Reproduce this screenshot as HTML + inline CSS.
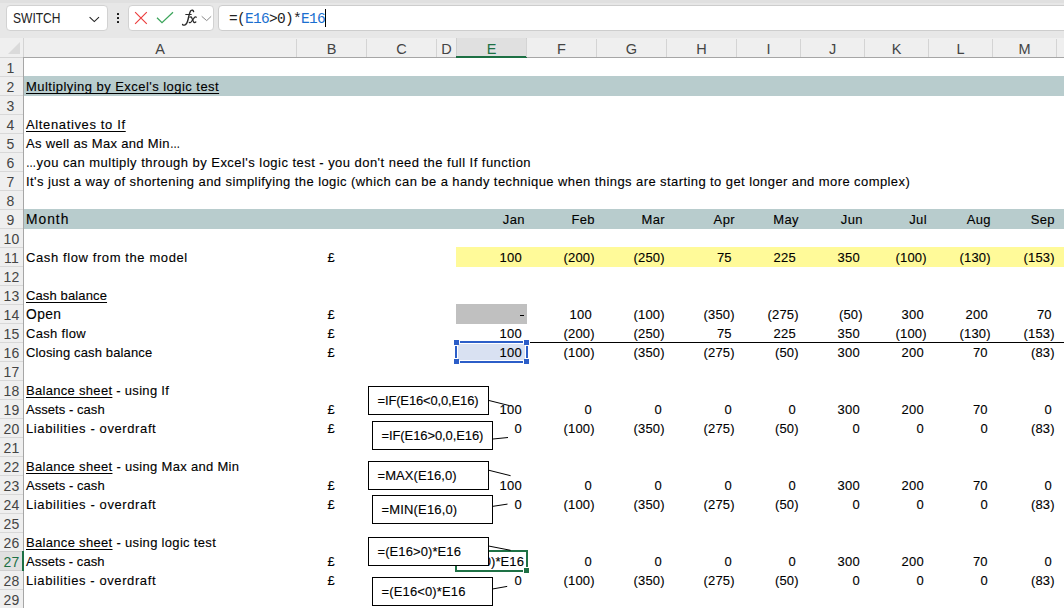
<!DOCTYPE html><html><head><meta charset="utf-8"><style>
*{margin:0;padding:0;box-sizing:border-box}
html,body{width:1064px;height:608px;overflow:hidden;background:#fff;position:relative;font-family:"Liberation Sans",sans-serif;}
.a{position:absolute}
.t{position:absolute;white-space:nowrap;font-size:13px;letter-spacing:0.4px;line-height:19px;color:#000;-webkit-text-stroke:0.12px #000}
.el{display:inline-block;width:10.5px;transform:scaleX(0.78);transform-origin:0 50%}
.rn{position:absolute;left:0;width:23px;text-align:center;font-size:14px;letter-spacing:0.3px;line-height:19px;color:#444;margin-top:1px}
.ch{position:absolute;top:40px;height:19px;text-align:center;font-size:14.5px;line-height:19px;color:#444}
.u{text-decoration:underline;text-underline-offset:2px;text-decoration-skip-ink:none}
.box{position:absolute;border:1px solid #000;background:#fff}
</style></head><body>

<div class="a" style="left:0;top:0;width:1064px;height:38px;background:#e7e7e7"></div>
<div class="a" style="left:0;top:0;width:1064px;height:3px;background:#e0e0e0"></div>
<div class="a" style="left:6px;top:5px;width:102px;height:26px;background:#fff;border:1px solid #d2d2d2;border-radius:4px"></div>
<div class="a" style="left:12.5px;top:8px;font-size:14.5px;line-height:21px;color:#222;transform:scaleX(0.83);transform-origin:0 0;white-space:nowrap">SWITCH</div>
<svg class="a" style="left:88px;top:14px" width="14" height="10" viewBox="0 0 14 10"><path d="M1.6 3.2 L6.3 7.6 L11 3.2" fill="none" stroke="#222" stroke-width="1.1"/></svg>
<div class="a" style="left:117px;top:13px;width:2.4px;height:2.4px;background:#111;border-radius:0.5px"></div>
<div class="a" style="left:117px;top:17px;width:2.4px;height:2.4px;background:#111;border-radius:0.5px"></div>
<div class="a" style="left:117px;top:21px;width:2.4px;height:2.4px;background:#111;border-radius:0.5px"></div>
<div class="a" style="left:128px;top:5px;width:86px;height:26px;background:#fff;border:1px solid #d2d2d2;border-radius:4px"></div>
<svg class="a" style="left:134px;top:11px" width="14" height="14" viewBox="0 0 14 14"><path d="M1.1 1.2 L12.8 12.9 M12.8 1.2 L1.1 12.9" fill="none" stroke="#ec3d3d" stroke-width="1.15"/></svg>
<svg class="a" style="left:156px;top:11px" width="18" height="13" viewBox="0 0 18 13"><path d="M1 6.8 L6 11.6 L17 1.2" fill="none" stroke="#3ba45a" stroke-width="1.25"/></svg>
<svg class="a" style="left:0;top:0" width="240" height="38"><g fill="none" stroke="#2a2a2a" stroke-linecap="round"><path d="M193.6 11.6 C193.4 10.2 192 9.8 191 10.5 C189.8 11.4 189.2 14.5 188.3 18.5 C187.4 22.6 186.4 24.9 184.5 25.1 C183.6 25.2 182.8 24.9 182.6 24.4" stroke-width="1.4"/><path d="M185.8 14.5 L191.2 14.5" stroke-width="1.2"/><path d="M189.9 17.2 C190.6 16.6 191.3 16.8 191.6 17.5 L193.6 21.9 C194 22.7 194.9 22.8 195.8 22" stroke-width="1.25"/><path d="M196.3 17.2 C195.8 16.7 195.1 16.7 194.5 17.4 L191.1 22 C190.5 22.8 189.8 22.9 189.3 22.5" stroke-width="1.25"/></g></svg>
<svg class="a" style="left:200px;top:14px" width="14" height="9" viewBox="0 0 14 9"><path d="M1.7 2.3 L6.7 6.6 L11.2 2.3" fill="none" stroke="#8a8a8a" stroke-width="1"/></svg>
<div class="a" style="left:218px;top:5px;width:900px;height:26px;background:#fff;border:1px solid #cdcdcd;border-radius:4px"></div>
<div class="a" style="left:229px;top:9px;font-family:'Liberation Mono',monospace;font-size:14.5px;letter-spacing:-0.7px;line-height:20px;color:#222;white-space:nowrap">=(<span style="color:#1a6fd0">E16</span>&gt;0)*<span style="color:#1a6fd0">E16</span></div>
<div class="a" style="left:325px;top:9px;width:1px;height:18px;background:#000"></div>
<div class="a" style="left:0;top:38px;width:1064px;height:19px;background:#efefef"></div>
<div class="a" style="left:0;top:57px;width:23px;height:1px;background:#d4d4d4"></div>
<div class="a" style="left:23px;top:57px;width:1041px;height:1px;background:#a6a6a6"></div>
<svg class="a" style="left:8px;top:42px" width="12" height="12" viewBox="0 0 12 12"><path d="M12 0 L12 12 L0 12 Z" fill="#dadada"/></svg>
<div class="a" style="left:296px;top:39px;width:1px;height:18px;background:#d4d4d4"></div>
<div class="ch" style="left:24px;width:272px;color:#444">A</div>
<div class="a" style="left:366px;top:39px;width:1px;height:18px;background:#d4d4d4"></div>
<div class="ch" style="left:297px;width:69px;color:#444">B</div>
<div class="a" style="left:436px;top:39px;width:1px;height:18px;background:#d4d4d4"></div>
<div class="ch" style="left:367px;width:69px;color:#444">C</div>
<div class="a" style="left:456px;top:39px;width:1px;height:18px;background:#d4d4d4"></div>
<div class="ch" style="left:437px;width:19px;color:#444">D</div>
<div class="a" style="left:456px;top:38px;width:71px;height:19px;background:#e0e0e0;border-left:1px solid #cfcfcf;border-right:1px solid #cfcfcf"></div>
<div class="a" style="left:456px;top:56px;width:71px;height:2px;background:#1d7044"></div>
<div class="a" style="left:526px;top:39px;width:1px;height:18px;background:#d4d4d4"></div>
<div class="ch" style="left:457px;width:69px;color:#1d7044">E</div>
<div class="a" style="left:596px;top:39px;width:1px;height:18px;background:#d4d4d4"></div>
<div class="ch" style="left:527px;width:69px;color:#444">F</div>
<div class="a" style="left:666px;top:39px;width:1px;height:18px;background:#d4d4d4"></div>
<div class="ch" style="left:597px;width:69px;color:#444">G</div>
<div class="a" style="left:736px;top:39px;width:1px;height:18px;background:#d4d4d4"></div>
<div class="ch" style="left:667px;width:69px;color:#444">H</div>
<div class="a" style="left:800px;top:39px;width:1px;height:18px;background:#d4d4d4"></div>
<div class="ch" style="left:737px;width:63px;color:#444">I</div>
<div class="a" style="left:864px;top:39px;width:1px;height:18px;background:#d4d4d4"></div>
<div class="ch" style="left:801px;width:63px;color:#444">J</div>
<div class="a" style="left:928px;top:39px;width:1px;height:18px;background:#d4d4d4"></div>
<div class="ch" style="left:865px;width:63px;color:#444">K</div>
<div class="a" style="left:992px;top:39px;width:1px;height:18px;background:#d4d4d4"></div>
<div class="ch" style="left:929px;width:63px;color:#444">L</div>
<div class="a" style="left:1056px;top:39px;width:1px;height:18px;background:#d4d4d4"></div>
<div class="ch" style="left:993px;width:63px;color:#444">M</div>
<div class="a" style="left:0;top:58px;width:23px;height:550px;background:#efefef"></div>
<div class="a" style="left:23px;top:38px;width:1px;height:19px;background:#d4d4d4"></div>
<div class="a" style="left:23px;top:57px;width:1px;height:551px;background:#a6a6a6"></div>
<div class="a" style="left:0;top:76px;width:23px;height:1px;background:#d8d8d8"></div>
<div class="rn" style="top:58px;left:-1px;color:#444">1</div>
<div class="a" style="left:0;top:95px;width:23px;height:1px;background:#d8d8d8"></div>
<div class="rn" style="top:77px;left:-1px;color:#444">2</div>
<div class="a" style="left:0;top:114px;width:23px;height:1px;background:#d8d8d8"></div>
<div class="rn" style="top:96px;left:-1px;color:#444">3</div>
<div class="a" style="left:0;top:133px;width:23px;height:1px;background:#d8d8d8"></div>
<div class="rn" style="top:115px;left:-1px;color:#444">4</div>
<div class="a" style="left:0;top:152px;width:23px;height:1px;background:#d8d8d8"></div>
<div class="rn" style="top:134px;left:-1px;color:#444">5</div>
<div class="a" style="left:0;top:171px;width:23px;height:1px;background:#d8d8d8"></div>
<div class="rn" style="top:153px;left:-1px;color:#444">6</div>
<div class="a" style="left:0;top:190px;width:23px;height:1px;background:#d8d8d8"></div>
<div class="rn" style="top:172px;left:-1px;color:#444">7</div>
<div class="a" style="left:0;top:209px;width:23px;height:1px;background:#d8d8d8"></div>
<div class="rn" style="top:191px;left:-1px;color:#444">8</div>
<div class="a" style="left:0;top:228px;width:23px;height:1px;background:#d8d8d8"></div>
<div class="rn" style="top:210px;left:-1px;color:#444">9</div>
<div class="a" style="left:0;top:247px;width:23px;height:1px;background:#d8d8d8"></div>
<div class="rn" style="top:229px;left:0px;color:#444">10</div>
<div class="a" style="left:0;top:266px;width:23px;height:1px;background:#d8d8d8"></div>
<div class="rn" style="top:248px;left:0px;color:#444">11</div>
<div class="a" style="left:0;top:285px;width:23px;height:1px;background:#d8d8d8"></div>
<div class="rn" style="top:267px;left:0px;color:#444">12</div>
<div class="a" style="left:0;top:304px;width:23px;height:1px;background:#d8d8d8"></div>
<div class="rn" style="top:286px;left:0px;color:#444">13</div>
<div class="a" style="left:0;top:323px;width:23px;height:1px;background:#d8d8d8"></div>
<div class="rn" style="top:305px;left:0px;color:#444">14</div>
<div class="a" style="left:0;top:342px;width:23px;height:1px;background:#d8d8d8"></div>
<div class="rn" style="top:324px;left:0px;color:#444">15</div>
<div class="a" style="left:0;top:361px;width:23px;height:1px;background:#d8d8d8"></div>
<div class="rn" style="top:343px;left:0px;color:#444">16</div>
<div class="a" style="left:0;top:380px;width:23px;height:1px;background:#d8d8d8"></div>
<div class="rn" style="top:362px;left:0px;color:#444">17</div>
<div class="a" style="left:0;top:399px;width:23px;height:1px;background:#d8d8d8"></div>
<div class="rn" style="top:381px;left:0px;color:#444">18</div>
<div class="a" style="left:0;top:418px;width:23px;height:1px;background:#d8d8d8"></div>
<div class="rn" style="top:400px;left:0px;color:#444">19</div>
<div class="a" style="left:0;top:437px;width:23px;height:1px;background:#d8d8d8"></div>
<div class="rn" style="top:419px;left:0px;color:#444">20</div>
<div class="a" style="left:0;top:456px;width:23px;height:1px;background:#d8d8d8"></div>
<div class="rn" style="top:438px;left:0px;color:#444">21</div>
<div class="a" style="left:0;top:475px;width:23px;height:1px;background:#d8d8d8"></div>
<div class="rn" style="top:457px;left:0px;color:#444">22</div>
<div class="a" style="left:0;top:494px;width:23px;height:1px;background:#d8d8d8"></div>
<div class="rn" style="top:476px;left:0px;color:#444">23</div>
<div class="a" style="left:0;top:513px;width:23px;height:1px;background:#d8d8d8"></div>
<div class="rn" style="top:495px;left:0px;color:#444">24</div>
<div class="a" style="left:0;top:532px;width:23px;height:1px;background:#d8d8d8"></div>
<div class="rn" style="top:514px;left:0px;color:#444">25</div>
<div class="a" style="left:0;top:551px;width:23px;height:1px;background:#d8d8d8"></div>
<div class="rn" style="top:533px;left:0px;color:#444">26</div>
<div class="a" style="left:0;top:570px;width:23px;height:1px;background:#d8d8d8"></div>
<div class="a" style="left:0;top:551px;width:23px;height:20px;background:#e0e0e0;border-top:1px solid #cfcfcf;border-bottom:1px solid #cfcfcf"></div>
<div class="a" style="left:22px;top:551px;width:2px;height:20px;background:#1d7044"></div>
<div class="rn" style="top:552px;left:0px;color:#1d7044">27</div>
<div class="a" style="left:0;top:589px;width:23px;height:1px;background:#d8d8d8"></div>
<div class="rn" style="top:571px;left:0px;color:#444">28</div>
<div class="a" style="left:0;top:608px;width:23px;height:1px;background:#d8d8d8"></div>
<div class="rn" style="top:590px;left:0px;color:#444">29</div>
<div class="a" style="left:24px;top:76px;width:1040px;height:20px;background:#b8cccd"></div>
<div class="a" style="left:24px;top:209px;width:1040px;height:20px;background:#b8cccd"></div>
<div class="a" style="left:456px;top:247px;width:608px;height:20px;background:#fffa99"></div>
<div class="a" style="left:456px;top:304px;width:71px;height:20px;background:#c0c0c0"></div>
<div class="a" style="left:529px;top:342px;width:535px;height:1px;background:#000"></div>
<div class="a" style="left:458px;top:344px;width:67px;height:16px;background:#d9e1f2"></div>
<div class="t u" style="left:26px;top:77px;letter-spacing:0.456px;font-size:13px">Multiplying by Excel's logic test</div>
<div class="t u" style="left:26px;top:115px;letter-spacing:0.637px;font-size:13px">Altenatives to If</div>
<div class="t " style="left:26px;top:134px;letter-spacing:0.327px;font-size:13px">As well as Max and Min<span class="el">…</span></div>
<div class="t " style="left:26px;top:153px;letter-spacing:0.460px;font-size:13px"><span class="el">…</span>you can multiply through by Excel's logic test - you don't need the full If function</div>
<div class="t " style="left:26px;top:172px;letter-spacing:0.417px;font-size:13px">It's just a way of shortening and simplifying the logic (which can be a handy technique when things are starting to get longer and more complex)</div>
<div class="t " style="left:26px;top:210px;letter-spacing:1.000px;font-size:13.8px">Month</div>
<div class="t " style="left:26px;top:248px;letter-spacing:0.600px;font-size:13px">Cash flow from the model</div>
<div class="t u" style="left:26px;top:286px;letter-spacing:0.127px;font-size:13px">Cash balance</div>
<div class="t " style="left:26px;top:305px;letter-spacing:0.400px;font-size:13.8px">Open</div>
<div class="t " style="left:26px;top:324px;letter-spacing:0.325px;font-size:13px">Cash flow</div>
<div class="t " style="left:26px;top:343px;letter-spacing:0.137px;font-size:13px">Closing cash balance</div>
<div class="t " style="left:26px;top:381px;letter-spacing:0.304px;font-size:13px"><span class="u">Balance sheet</span> - using If</div>
<div class="t " style="left:26px;top:400px;letter-spacing:0.050px;font-size:13px">Assets - cash</div>
<div class="t " style="left:26px;top:419px;letter-spacing:0.609px;font-size:13px">Liabilities - overdraft</div>
<div class="t " style="left:26px;top:457px;letter-spacing:0.312px;font-size:13px"><span class="u">Balance sheet</span> - using Max and Min</div>
<div class="t " style="left:26px;top:476px;letter-spacing:0.050px;font-size:13px">Assets - cash</div>
<div class="t " style="left:26px;top:495px;letter-spacing:0.609px;font-size:13px">Liabilities - overdraft</div>
<div class="t " style="left:26px;top:533px;letter-spacing:0.316px;font-size:13px"><span class="u">Balance sheet</span> - using logic test</div>
<div class="t " style="left:26px;top:552px;letter-spacing:0.033px;font-size:13px">Assets - cash</div>
<div class="t " style="left:26px;top:571px;letter-spacing:0.600px;font-size:13px">Liabilities - overdraft</div>
<div class="t" style="left:296px;width:70px;text-align:center;top:248px;letter-spacing:0">£</div>
<div class="t" style="left:296px;width:70px;text-align:center;top:305px;letter-spacing:0">£</div>
<div class="t" style="left:296px;width:70px;text-align:center;top:324px;letter-spacing:0">£</div>
<div class="t" style="left:296px;width:70px;text-align:center;top:343px;letter-spacing:0">£</div>
<div class="t" style="left:296px;width:70px;text-align:center;top:400px;letter-spacing:0">£</div>
<div class="t" style="left:296px;width:70px;text-align:center;top:419px;letter-spacing:0">£</div>
<div class="t" style="left:296px;width:70px;text-align:center;top:476px;letter-spacing:0">£</div>
<div class="t" style="left:296px;width:70px;text-align:center;top:495px;letter-spacing:0">£</div>
<div class="t" style="left:296px;width:70px;text-align:center;top:552px;letter-spacing:0">£</div>
<div class="t" style="left:296px;width:70px;text-align:center;top:571px;letter-spacing:0">£</div>
<div class="t" style="right:539px;top:210px;letter-spacing:0.4px">Jan</div>
<div class="t" style="right:469px;top:210px;letter-spacing:0.4px">Feb</div>
<div class="t" style="right:399px;top:210px;letter-spacing:0.4px">Mar</div>
<div class="t" style="right:329px;top:210px;letter-spacing:0.4px">Apr</div>
<div class="t" style="right:265px;top:210px;letter-spacing:0.4px">May</div>
<div class="t" style="right:201px;top:210px;letter-spacing:0.4px">Jun</div>
<div class="t" style="right:137px;top:210px;letter-spacing:0.4px">Jul</div>
<div class="t" style="right:73px;top:210px;letter-spacing:0.4px">Aug</div>
<div class="t" style="right:9px;top:210px;letter-spacing:0.4px">Sep</div>
<div class="t" style="right:542.2px;top:248px;letter-spacing:0.2px">100</div>
<div class="t" style="right:469.2px;top:248px;letter-spacing:0.2px">(200)</div>
<div class="t" style="right:399.2px;top:248px;letter-spacing:0.2px">(250)</div>
<div class="t" style="right:332.2px;top:248px;letter-spacing:0.2px">75</div>
<div class="t" style="right:268.2px;top:248px;letter-spacing:0.2px">225</div>
<div class="t" style="right:204.2px;top:248px;letter-spacing:0.2px">350</div>
<div class="t" style="right:137.2px;top:248px;letter-spacing:0.2px">(100)</div>
<div class="t" style="right:73.2px;top:248px;letter-spacing:0.2px">(130)</div>
<div class="t" style="right:9.2px;top:248px;letter-spacing:0.2px">(153)</div>
<div class="a" style="left:520px;top:315px;width:4px;height:1px;background:#000"></div>
<div class="t" style="right:472.2px;top:305px;letter-spacing:0.2px">100</div>
<div class="t" style="right:399.2px;top:305px;letter-spacing:0.2px">(100)</div>
<div class="t" style="right:329.2px;top:305px;letter-spacing:0.2px">(350)</div>
<div class="t" style="right:265.2px;top:305px;letter-spacing:0.2px">(275)</div>
<div class="t" style="right:201.2px;top:305px;letter-spacing:0.2px">(50)</div>
<div class="t" style="right:140.2px;top:305px;letter-spacing:0.2px">300</div>
<div class="t" style="right:76.2px;top:305px;letter-spacing:0.2px">200</div>
<div class="t" style="right:12.2px;top:305px;letter-spacing:0.2px">70</div>
<div class="t" style="right:542.2px;top:324px;letter-spacing:0.2px">100</div>
<div class="t" style="right:469.2px;top:324px;letter-spacing:0.2px">(200)</div>
<div class="t" style="right:399.2px;top:324px;letter-spacing:0.2px">(250)</div>
<div class="t" style="right:332.2px;top:324px;letter-spacing:0.2px">75</div>
<div class="t" style="right:268.2px;top:324px;letter-spacing:0.2px">225</div>
<div class="t" style="right:204.2px;top:324px;letter-spacing:0.2px">350</div>
<div class="t" style="right:137.2px;top:324px;letter-spacing:0.2px">(100)</div>
<div class="t" style="right:73.2px;top:324px;letter-spacing:0.2px">(130)</div>
<div class="t" style="right:9.2px;top:324px;letter-spacing:0.2px">(153)</div>
<div class="t" style="right:542.2px;top:343px;letter-spacing:0.2px">100</div>
<div class="t" style="right:469.2px;top:343px;letter-spacing:0.2px">(100)</div>
<div class="t" style="right:399.2px;top:343px;letter-spacing:0.2px">(350)</div>
<div class="t" style="right:329.2px;top:343px;letter-spacing:0.2px">(275)</div>
<div class="t" style="right:265.2px;top:343px;letter-spacing:0.2px">(50)</div>
<div class="t" style="right:204.2px;top:343px;letter-spacing:0.2px">300</div>
<div class="t" style="right:140.2px;top:343px;letter-spacing:0.2px">200</div>
<div class="t" style="right:76.2px;top:343px;letter-spacing:0.2px">70</div>
<div class="t" style="right:9.2px;top:343px;letter-spacing:0.2px">(83)</div>
<div class="t" style="right:542.2px;top:400px;letter-spacing:0.2px">100</div>
<div class="t" style="right:472.2px;top:400px;letter-spacing:0.2px">0</div>
<div class="t" style="right:402.2px;top:400px;letter-spacing:0.2px">0</div>
<div class="t" style="right:332.2px;top:400px;letter-spacing:0.2px">0</div>
<div class="t" style="right:268.2px;top:400px;letter-spacing:0.2px">0</div>
<div class="t" style="right:204.2px;top:400px;letter-spacing:0.2px">300</div>
<div class="t" style="right:140.2px;top:400px;letter-spacing:0.2px">200</div>
<div class="t" style="right:76.2px;top:400px;letter-spacing:0.2px">70</div>
<div class="t" style="right:12.2px;top:400px;letter-spacing:0.2px">0</div>
<div class="t" style="right:542.2px;top:419px;letter-spacing:0.2px">0</div>
<div class="t" style="right:469.2px;top:419px;letter-spacing:0.2px">(100)</div>
<div class="t" style="right:399.2px;top:419px;letter-spacing:0.2px">(350)</div>
<div class="t" style="right:329.2px;top:419px;letter-spacing:0.2px">(275)</div>
<div class="t" style="right:265.2px;top:419px;letter-spacing:0.2px">(50)</div>
<div class="t" style="right:204.2px;top:419px;letter-spacing:0.2px">0</div>
<div class="t" style="right:140.2px;top:419px;letter-spacing:0.2px">0</div>
<div class="t" style="right:76.2px;top:419px;letter-spacing:0.2px">0</div>
<div class="t" style="right:9.2px;top:419px;letter-spacing:0.2px">(83)</div>
<div class="t" style="right:542.2px;top:476px;letter-spacing:0.2px">100</div>
<div class="t" style="right:472.2px;top:476px;letter-spacing:0.2px">0</div>
<div class="t" style="right:402.2px;top:476px;letter-spacing:0.2px">0</div>
<div class="t" style="right:332.2px;top:476px;letter-spacing:0.2px">0</div>
<div class="t" style="right:268.2px;top:476px;letter-spacing:0.2px">0</div>
<div class="t" style="right:204.2px;top:476px;letter-spacing:0.2px">300</div>
<div class="t" style="right:140.2px;top:476px;letter-spacing:0.2px">200</div>
<div class="t" style="right:76.2px;top:476px;letter-spacing:0.2px">70</div>
<div class="t" style="right:12.2px;top:476px;letter-spacing:0.2px">0</div>
<div class="t" style="right:542.2px;top:495px;letter-spacing:0.2px">0</div>
<div class="t" style="right:469.2px;top:495px;letter-spacing:0.2px">(100)</div>
<div class="t" style="right:399.2px;top:495px;letter-spacing:0.2px">(350)</div>
<div class="t" style="right:329.2px;top:495px;letter-spacing:0.2px">(275)</div>
<div class="t" style="right:265.2px;top:495px;letter-spacing:0.2px">(50)</div>
<div class="t" style="right:204.2px;top:495px;letter-spacing:0.2px">0</div>
<div class="t" style="right:140.2px;top:495px;letter-spacing:0.2px">0</div>
<div class="t" style="right:76.2px;top:495px;letter-spacing:0.2px">0</div>
<div class="t" style="right:9.2px;top:495px;letter-spacing:0.2px">(83)</div>
<div class="t" style="right:472.2px;top:552px;letter-spacing:0.2px">0</div>
<div class="t" style="right:402.2px;top:552px;letter-spacing:0.2px">0</div>
<div class="t" style="right:332.2px;top:552px;letter-spacing:0.2px">0</div>
<div class="t" style="right:268.2px;top:552px;letter-spacing:0.2px">0</div>
<div class="t" style="right:204.2px;top:552px;letter-spacing:0.2px">300</div>
<div class="t" style="right:140.2px;top:552px;letter-spacing:0.2px">200</div>
<div class="t" style="right:76.2px;top:552px;letter-spacing:0.2px">70</div>
<div class="t" style="right:12.2px;top:552px;letter-spacing:0.2px">0</div>
<div class="t" style="right:542.2px;top:571px;letter-spacing:0.2px">0</div>
<div class="t" style="right:469.2px;top:571px;letter-spacing:0.2px">(100)</div>
<div class="t" style="right:399.2px;top:571px;letter-spacing:0.2px">(350)</div>
<div class="t" style="right:329.2px;top:571px;letter-spacing:0.2px">(275)</div>
<div class="t" style="right:265.2px;top:571px;letter-spacing:0.2px">(50)</div>
<div class="t" style="right:204.2px;top:571px;letter-spacing:0.2px">0</div>
<div class="t" style="right:140.2px;top:571px;letter-spacing:0.2px">0</div>
<div class="t" style="right:76.2px;top:571px;letter-spacing:0.2px">0</div>
<div class="t" style="right:9.2px;top:571px;letter-spacing:0.2px">(83)</div>
<div class="a" style="left:453px;top:339px;width:77px;height:26px;border:2px solid #fff"></div>
<div class="a" style="left:460px;top:341px;width:63px;height:2px;background:#2c5ec8"></div>
<div class="a" style="left:460px;top:361px;width:63px;height:2px;background:#2c5ec8"></div>
<div class="a" style="left:455px;top:346px;width:2px;height:12px;background:#2c5ec8"></div>
<div class="a" style="left:526px;top:346px;width:2px;height:12px;background:#2c5ec8"></div>
<div class="a" style="left:454px;top:340px;width:5px;height:5px;background:#2c5ec8"></div>
<div class="a" style="left:524px;top:340px;width:5px;height:5px;background:#2c5ec8"></div>
<div class="a" style="left:454px;top:359px;width:5px;height:5px;background:#2c5ec8"></div>
<div class="a" style="left:524px;top:359px;width:5px;height:5px;background:#2c5ec8"></div>
<div class="a" style="left:457px;top:551px;width:69px;height:19px;overflow:hidden"><div class="t" style="right:2px;top:1px;letter-spacing:0.1px">=(E16&gt;0)*E16</div></div>
<div class="a" style="left:455px;top:550px;width:73px;height:22px;border:2px solid #1e7145"></div>
<div class="a" style="left:523px;top:567px;width:7px;height:7px;background:#fff"></div>
<div class="a" style="left:524px;top:568px;width:5px;height:5px;background:#1e7145"></div>
<svg class="a" style="left:0;top:0" width="1064" height="608">
<line x1="489" y1="400.5" x2="509" y2="405.5" stroke="#000" stroke-width="1"/>
<line x1="493" y1="439" x2="508" y2="437.5" stroke="#000" stroke-width="1"/>
<line x1="489" y1="470.3" x2="510.6" y2="475.7" stroke="#000" stroke-width="1"/>
<line x1="493" y1="506.3" x2="507.5" y2="504.1" stroke="#000" stroke-width="1"/>
<line x1="489" y1="546.1" x2="510.6" y2="550.3" stroke="#000" stroke-width="1"/>
<line x1="493" y1="588.9" x2="507.2" y2="586.4" stroke="#000" stroke-width="1"/>
</svg>
<div class="box" style="left:368px;top:386px;width:121px;height:29px"></div>
<div class="t" style="left:377.5px;top:391px;letter-spacing:-0.15px">=IF(E16&lt;0,0,E16)</div>
<div class="box" style="left:372px;top:421px;width:121px;height:29px"></div>
<div class="t" style="left:381.5px;top:426px;letter-spacing:-0.1px">=IF(E16&gt;0,0,E16)</div>
<div class="box" style="left:368px;top:461px;width:121px;height:29px"></div>
<div class="t" style="left:377.5px;top:466px;letter-spacing:0.07px">=MAX(E16,0)</div>
<div class="box" style="left:372px;top:495px;width:121px;height:29px"></div>
<div class="t" style="left:381.5px;top:500px;letter-spacing:0.16px">=MIN(E16,0)</div>
<div class="box" style="left:368px;top:537px;width:121px;height:29px"></div>
<div class="t" style="left:377.5px;top:542px;letter-spacing:0.09px">=(E16&gt;0)*E16</div>
<div class="box" style="left:372px;top:577px;width:121px;height:29px"></div>
<div class="t" style="left:381.5px;top:582px;letter-spacing:0.14px">=(E16&lt;0)*E16</div>
</body></html>
